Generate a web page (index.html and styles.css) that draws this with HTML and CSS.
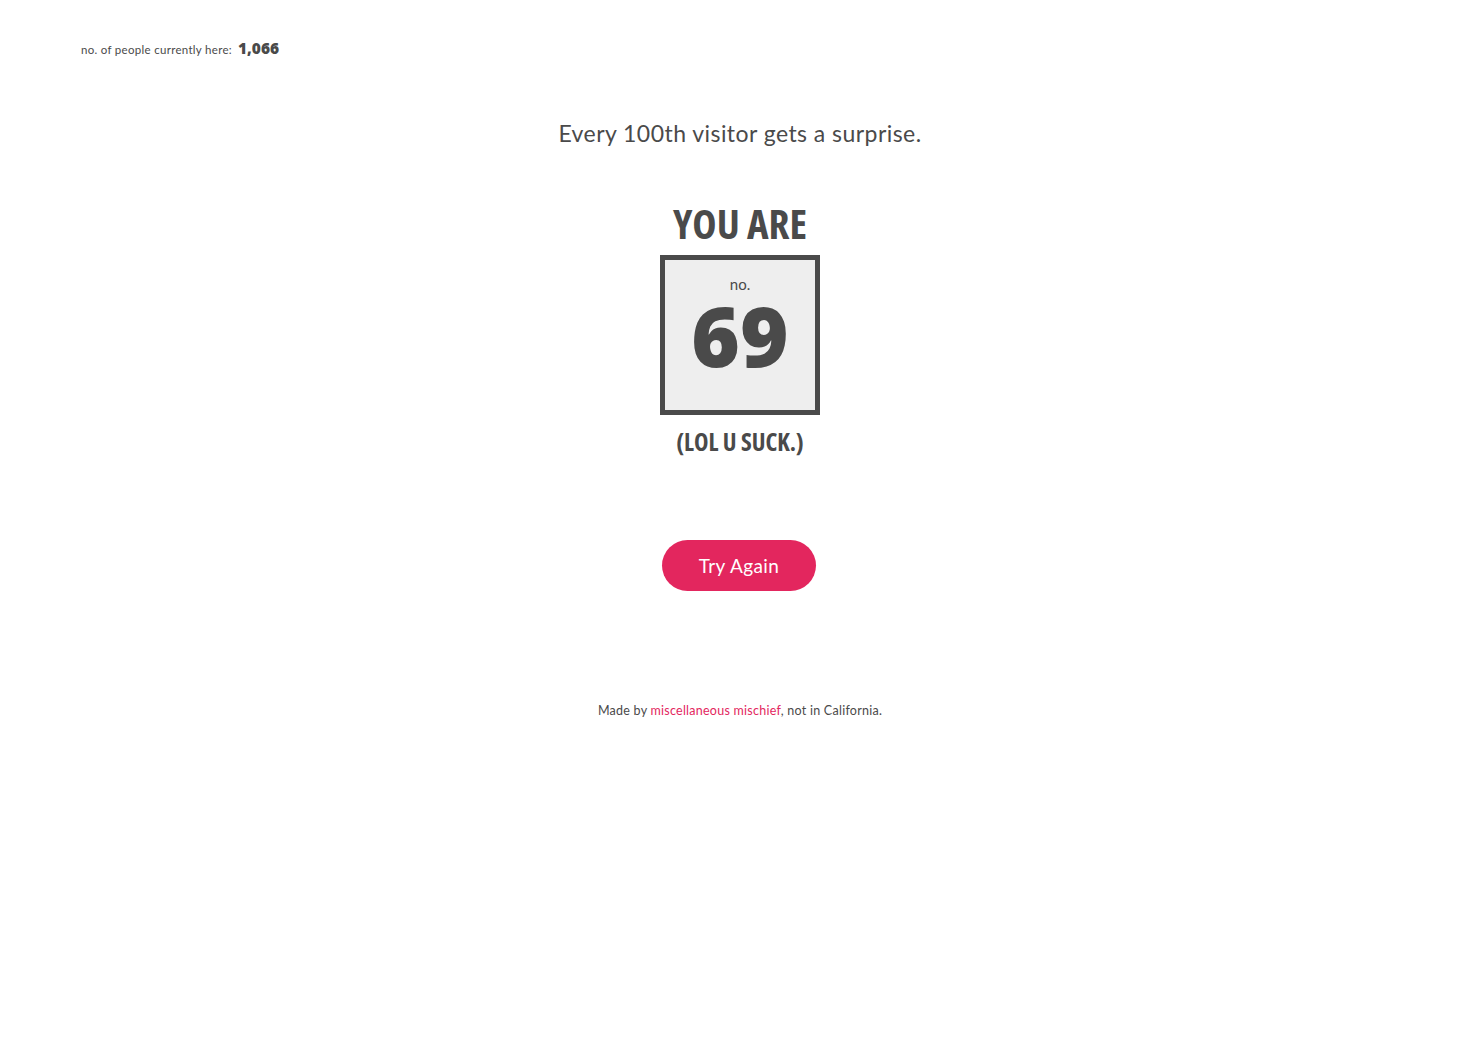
FILE: index.html
```html
<!DOCTYPE html>
<html>
<head>
<meta charset="utf-8">
<link rel="stylesheet" href="styles.css">
</head>
<body>
<div class="counter">
  <span class="counter-label">no. of people currently here:</span>
  <span class="counter-num">1,066</span>
</div>
<main class="main">
  <h2 class="tagline">Every 100th visitor gets a surprise.</h2>
  <h1 class="you-are">YOU ARE</h1>
  <div class="box">
    <div class="box-no">no.</div>
    <div class="box-num">69</div>
  </div>
  <div class="lol">(LOL U SUCK.)</div>
  <a class="btn" href="#">Try Again</a>
  <p class="footer">Made by <a href="#">miscellaneous mischief</a>, not in California.</p>
</main>
</body>
</html>
```

FILE: styles.css
```css
html, body {
  margin: 0;
  padding: 0;
  background: #fff;
}
body {
  font-family: "Lato", "DejaVu Sans", sans-serif;
  color: #4a4a4a;
}
.counter {
  display: flex;
  align-items: baseline;
  gap: 6px;
  padding: 37px 0 0 81px;
  height: 20px;
}
.counter-label {
  font-size: 11.5px;
  letter-spacing: 0.3px;
}
.counter-num {
  font-family: "Open Sans", sans-serif;
  font-weight: 800;
  font-size: 15.5px;
}
.main {
  display: flex;
  flex-direction: column;
  align-items: center;
}
.tagline {
  margin: 61px 0 0;
  font-weight: 400;
  font-size: 23px;
  letter-spacing: 0.45px;
  line-height: 30px;
}
.you-are {
  margin: 52px 0 0;
  font-family: "Open Sans", sans-serif;
  font-stretch: 75%;
  font-weight: 700;
  font-size: 41px;
  line-height: 46px;
}
.box {
  box-sizing: border-box;
  margin-top: 9px;
  width: 160px;
  height: 160px;
  border: 5px solid #4a4a4a;
  background: #eeeeee;
  display: flex;
  flex-direction: column;
  align-items: center;
}
.box-no {
  margin-top: 16px;
  font-size: 15px;
  line-height: 16px;
}
.box-num {
  margin-top: 7px;
  font-family: "Open Sans", sans-serif;
  font-weight: 800;
  font-size: 83px;
  line-height: 72px;
}
.lol {
  margin-top: 12px;
  font-family: "Open Sans", sans-serif;
  font-stretch: 75%;
  font-weight: 700;
  font-size: 24.5px;
  line-height: 30px;
}
.btn {
  margin: 83px 2px 0 0;
  width: 154px;
  height: 51px;
  border-radius: 26px;
  background: #e3265e;
  color: #fff;
  text-decoration: none;
  font-size: 19px;
  letter-spacing: 0.4px;
  display: flex;
  align-items: center;
  justify-content: center;
}
.footer {
  margin: 112px 0 0;
  font-size: 12.5px;
  letter-spacing: 0.25px;
  line-height: 16px;
}
.footer a {
  color: #e3265e;
  text-decoration: none;
}
```
